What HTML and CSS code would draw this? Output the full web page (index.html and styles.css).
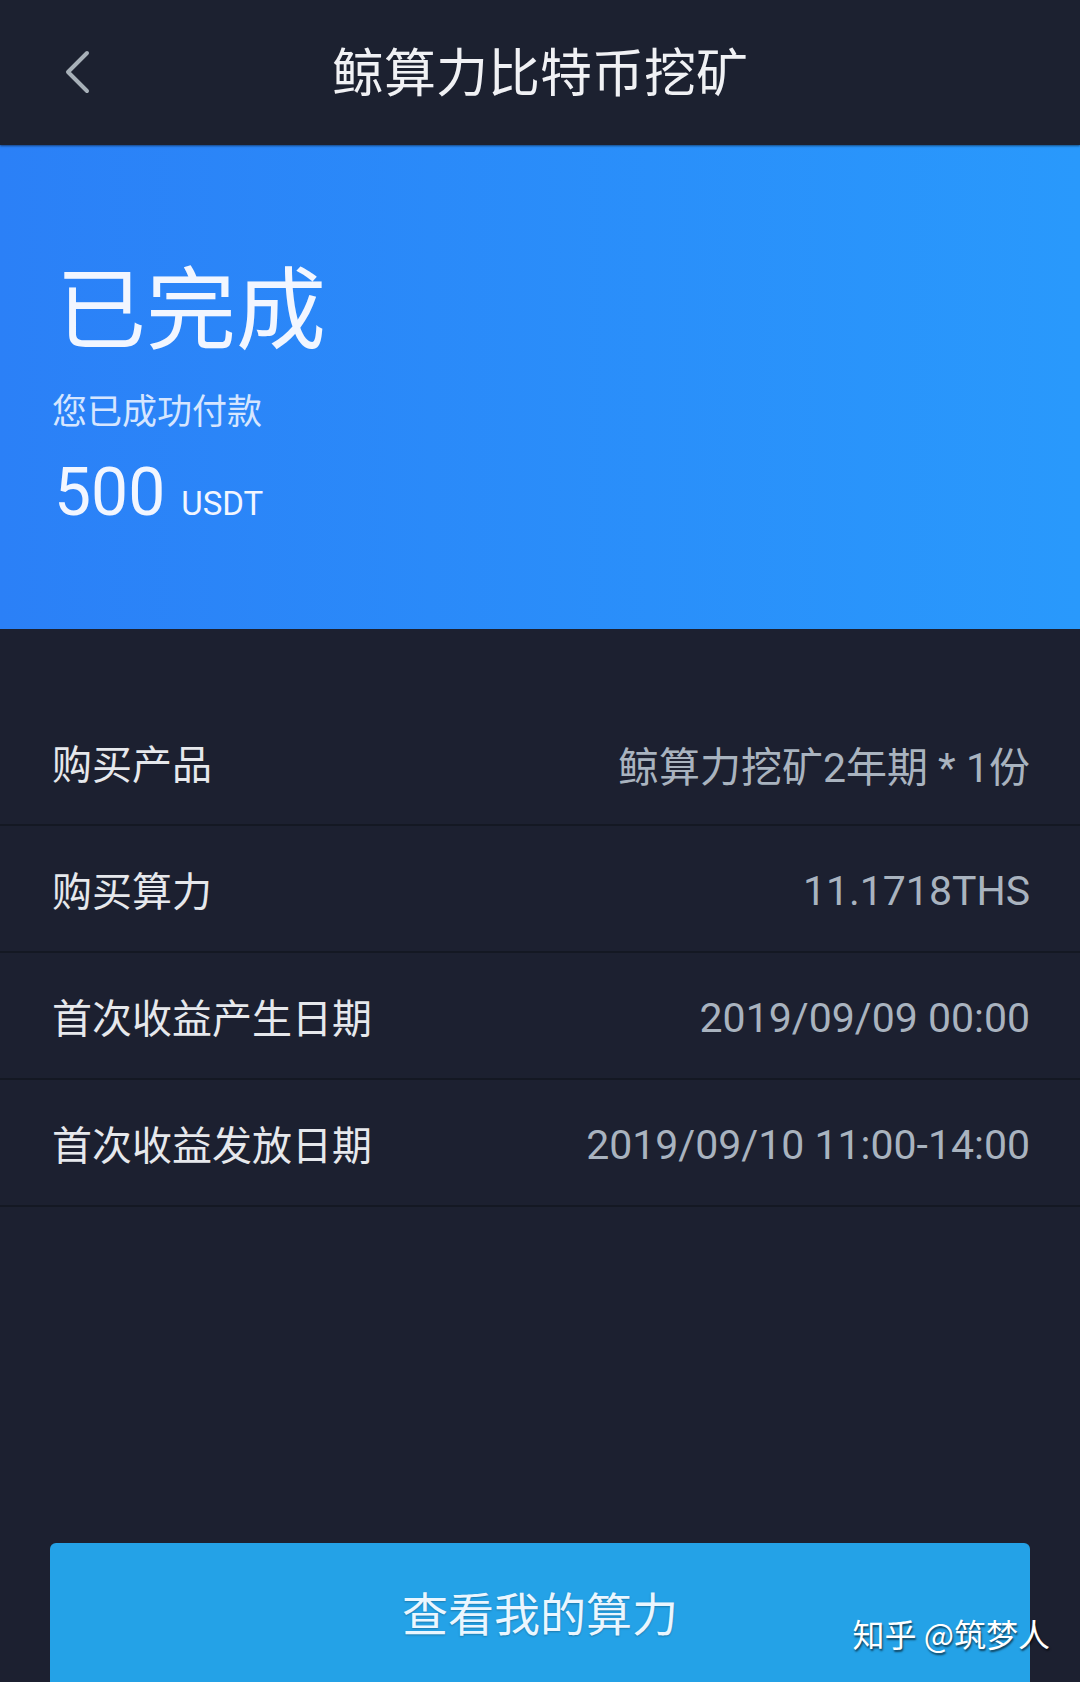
FILE: index.html
```html
<!DOCTYPE html>
<html lang="zh-CN">
<head>
  <meta charset="UTF-8">
  <meta name="viewport" content="width=device-width, initial-scale=1.0">
  <title>鲸算力比特币挖矿</title>
  <link rel="stylesheet" href="styles.css">
</head>
<body>

  <header class="topbar">
    <a class="back" href="#">
      <svg width="28" height="44" viewBox="0 0 28 44">
        <path d="M24 3 L5 22 L24 41" fill="none" stroke="#a7b0b8" stroke-width="4" stroke-linecap="round" stroke-linejoin="round"/>
      </svg>
    </a>
    <h1 class="title">鲸算力比特币挖矿</h1>
    <span></span>
  </header>

  <section class="hero">
    <div class="status">已完成</div>
    <div class="paid">您已成功付款</div>
    <div class="amount">500<span class="unit">USDT</span></div>
  </section>

  <ul class="details">
    <li class="row"><span class="label">购买产品</span><span class="value">鲸算力挖矿2年期 * 1份</span></li>
    <li class="row"><span class="label">购买算力</span><span class="value">11.1718THS</span></li>
    <li class="row"><span class="label">首次收益产生日期</span><span class="value">2019/09/09 00:00</span></li>
    <li class="row"><span class="label">首次收益发放日期</span><span class="value">2019/09/10 11:00-14:00</span></li>
  </ul>

  <button type="button" class="main-btn">查看我的算力</button>

  <div class="watermark">知乎 @筑梦人</div>

</body>
</html>
```

FILE: styles.css
```css
/* page */
body {
  margin: 0;
  width: 1080px;
  height: 1682px;
  overflow: hidden;
  position: relative;
  background-color: #1c2030;
  font-family: Roboto, "Noto Sans CJK SC", sans-serif;
  color: #e8eaee;
}

.topbar {
  height: 145px;
  box-sizing: border-box;
  padding-bottom: 6px;
  display: grid;
  grid-template-columns: 1fr auto 1fr;
  align-items: center;
  background-color: #1c2130;
  box-shadow: 0 1px 2px rgba(0, 0, 0, 0.5);
  position: relative;
  z-index: 1;
}

.back {
  padding-left: 63px;
  padding-top: 4px;
  display: flex;
  align-items: center;
  height: 44px;
}

.title {
  margin: 0;
  font-size: 52px;
  font-weight: 400;
  color: #f0f1f4;
}

.hero {
  height: 484px;
  box-sizing: border-box;
  padding: 122px 0 0 52px;
  background: linear-gradient(to right, #2b80f7, #2999fc);
  color: #f2f6ff;
}

.status {
  font-size: 90px;
  line-height: 90px;
  margin-left: 4px;
}

.paid {
  margin-top: 39px;
  font-size: 35px;
  line-height: 34px;
  color: #d6e6ff;
}

.amount {
  margin-top: 30px;
  font-size: 66px;
  line-height: 66px;
  margin-left: 2px;
}

.unit {
  font-size: 33px;
  margin-left: 16px;
}

.details {
  list-style: none;
  margin: 70px 0 0;
  padding: 0;
}

.row {
  height: 125px;
  border-bottom: 2px solid #141823;
  display: flex;
  justify-content: space-between;
  align-items: center;
  padding: 0 50px 0 52px;
  font-size: 40px;
}

.label {
  color: #e6e8ec;
}

.value {
  color: #a9b3bf;
  font-size: 41px;
  padding-top: 4px;
}

.main-btn {
  display: block;
  margin: 336px 50px 0;
  width: 980px;
  height: 148px;
  padding: 0 0 12px;
  border: none;
  border-radius: 6px;
  background-color: #24a2e7;
  color: #eaf6ff;
  font-family: "Noto Sans CJK SC", sans-serif;
  font-size: 46px;
  text-shadow: 0 1px 2px rgba(0, 0, 0, 0.25);
  cursor: pointer;
}

.watermark {
  position: absolute;
  right: 30px;
  bottom: 26px;
  font-family: "Noto Sans CJK SC", sans-serif;
  font-size: 32px;
  color: #ffffff;
  text-shadow: 1px 2px 2px rgba(0, 0, 0, 0.6);
}
```
